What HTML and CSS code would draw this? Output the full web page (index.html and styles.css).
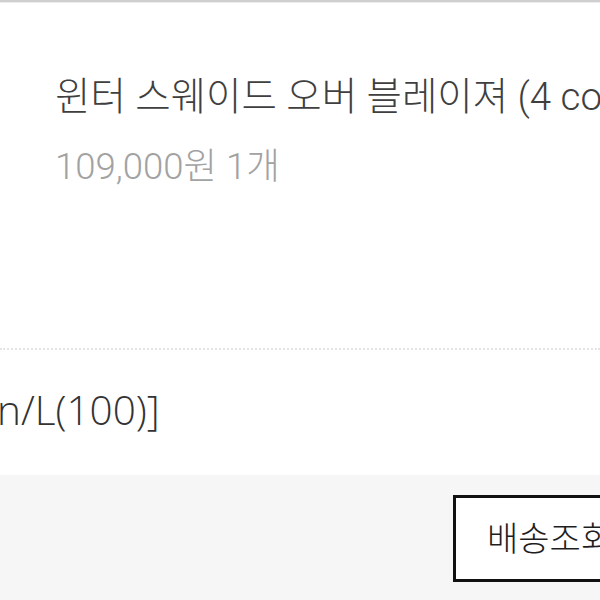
FILE: index.html
```html
<!DOCTYPE html>
<html lang="ko">
<head>
<meta charset="utf-8">
<title>주문 상세</title>
<link rel="stylesheet" href="styles.css">
</head>
<body>
<div class="page">
  <div class="top-rule"></div>
  <section class="order-item">
    <div class="item-info">
      <p class="item-name">윈터 스웨이드 오버 블레이져 (4 color)</p>
      <p class="item-price">109,000원 1개</p>
    </div>
  </section>
  <div class="divider"></div>
  <section class="item-option">
    <p class="option-text">n/L(100)]</p>
  </section>
  <footer class="order-actions">
    <button class="btn-outline" type="button">배송조회</button>
  </footer>
</div>
</body>
</html>
```
FILE: styles.css
```css
html, body {
  margin: 0;
  padding: 0;
  background: #ffffff;
}

.page {
  width: 600px;
  height: 600px;
  overflow: hidden;
  display: flex;
  flex-direction: column;
  font-family: Roboto, "Noto Sans CJK KR", sans-serif;
  font-weight: 300;
}

.top-rule {
  height: 2px;
  background: #cfcfcf;
  border-bottom: 1px solid #ececec;
  flex: none;
}

.order-item {
  height: 345px;
  padding: 71px 0 0 55px;
  box-sizing: border-box;
  flex: none;
}

.item-info p {
  margin: 0;
  white-space: nowrap;
}

.item-name {
  font-size: 38.5px;
  line-height: 46px;
  color: #3f3f3f;
}

.item-price {
  margin-top: 25px !important;
  font-size: 36.5px;
  line-height: 44px;
  color: #a2a2a2;
}

.divider {
  height: 0;
  border-top: 2px dotted #e4e4e4;
  flex: none;
}

.item-option {
  height: 125px;
  padding-top: 34px;
  box-sizing: border-box;
  flex: none;
}

.option-text {
  margin: 0 0 0 -3px;
  font-family: "Open Sans", "Noto Sans CJK KR", sans-serif;
  font-weight: 300;
  font-size: 40.5px;
  line-height: 52px;
  color: #333333;
  white-space: nowrap;
}

.order-actions {
  flex: 1;
  background: #f6f6f6;
  display: flex;
  align-items: flex-start;
  padding: 20px 0 0 453px;
}

.btn-outline {
  flex: none;
  width: 200px;
  height: 87px;
  box-sizing: border-box;
  border: 3px solid #111111;
  background: #ffffff;
  padding: 0 0 4px 31px;
  text-align: left;
  font-family: "Noto Sans CJK KR", sans-serif;
  font-weight: 300;
  font-size: 34px;
  color: #1e1e1e;
}
```
